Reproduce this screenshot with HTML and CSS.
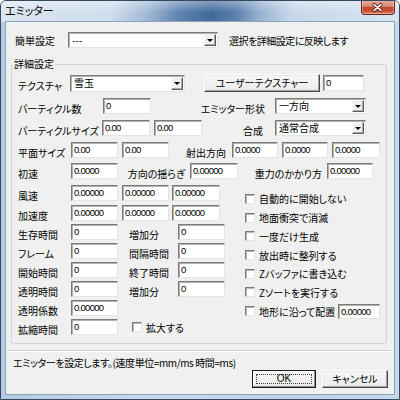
FILE: index.html
```html
<!DOCTYPE html>
<html lang="ja">
<head>
<meta charset="utf-8">
<title>エミッター</title>
<link rel="stylesheet" href="styles.css">
</head>
<body>
<div class="window">
  <div class="titlebar">
    <span class="title">エミッター</span>
    <div class="close-btn">
      <svg width="34" height="15" viewBox="0 0 34 15">
        <path d="M13.5 4.5 L20.5 10.5 M20.5 4.5 L13.5 10.5" stroke="#5a1a10" stroke-width="3.4" stroke-linecap="round" fill="none"/>
        <path d="M13.5 4.5 L20.5 10.5 M20.5 4.5 L13.5 10.5" stroke="#ffffff" stroke-width="1.8" stroke-linecap="round" fill="none"/>
      </svg>
    </div>
  </div>
  <div class="client">
    <div class="top-row">
      <span class="label lbl-kantan">簡単設定</span>
      <div class="combo w150"><span class="combo-text">---</span><span class="combo-arrow"></span></div>
      <span class="label hint">選択を詳細設定に反映します</span>
    </div>

    <div class="group">
      <span class="legend">詳細設定</span>

      <div class="row row-a">
        <span class="label w52">テクスチャ</span>
        <div class="combo combo-tall w115"><span class="combo-text">雪玉</span><span class="combo-arrow"></span></div>
        <div class="btn btn-user">ユーザーテクスチャー</div>
        <div class="edit w41 ml3">0</div>
      </div>

      <div class="row mt6">
        <span class="label w85">パーティクル数</span>
        <div class="edit w48">0</div>
        <span class="label right w124 pr10">エミッター形状</span>
        <div class="combo w91"><span class="combo-text">一方向</span><span class="combo-arrow"></span></div>
      </div>

      <div class="row mt6">
        <span class="label w84">パーティクルサイズ</span>
        <div class="edit w48">0.00</div>
        <div class="edit w48 ml4">0.00</div>
        <span class="label right w73 pr12">合成</span>
        <div class="combo w91"><span class="combo-text">通常合成</span><span class="combo-arrow"></span></div>
      </div>

      <div class="row mt6">
        <span class="label w53">平面サイズ</span>
        <div class="edit w47">0.00</div>
        <div class="edit w47 ml4">0.00</div>
        <span class="label w63 pl17">射出方向</span>
        <div class="edit w46">0.0000</div>
        <div class="edit w46 ml4">0.0000</div>
        <div class="edit w48 ml4">0.0000</div>
      </div>

      <div class="row mt5">
        <span class="label w53">初速</span>
        <div class="edit w47">0.0000</div>
        <span class="label right w72 pr5">方向の揺らぎ</span>
        <div class="edit w48">0.00000</div>
        <span class="label right w89 pr5">重力のかかり方</span>
        <div class="edit w46">0.00000</div>
      </div>

      <div class="lower">
        <div class="left-col">
          <div class="row">
            <span class="label w53">風速</span>
            <div class="edit w47">0.00000</div>
            <div class="edit w47 ml4">0.00000</div>
            <div class="edit w48 ml3">0.00000</div>
          </div>
          <div class="row mt4">
            <span class="label w53">加速度</span>
            <div class="edit w47">0.00000</div>
            <div class="edit w47 ml4">0.00000</div>
            <div class="edit w48 ml3">0.00000</div>
          </div>
          <div class="row mt3">
            <span class="label w53">生存時間</span>
            <div class="edit w47">0</div>
            <span class="label w60 pl11">増加分</span>
            <div class="edit w47">0</div>
          </div>
          <div class="row mt3">
            <span class="label w53">フレーム</span>
            <div class="edit w47">0</div>
            <span class="label w60 pl11">間隔時間</span>
            <div class="edit w47">0</div>
          </div>
          <div class="row mt3">
            <span class="label w53">開始時間</span>
            <div class="edit w47">0</div>
            <span class="label w60 pl11">終了時間</span>
            <div class="edit w47">0</div>
          </div>
          <div class="row mt3">
            <span class="label w53">透明時間</span>
            <div class="edit w47">0</div>
            <span class="label w60 pl11">増加分</span>
            <div class="edit w47">0</div>
          </div>
          <div class="row mt3">
            <span class="label w53">透明係数</span>
            <div class="edit w47">0.00000</div>
          </div>
          <div class="row mt3">
            <span class="label w53">拡縮時間</span>
            <div class="edit w47">0</div>
            <span class="check ml15"></span>
            <span class="check-text">拡大する</span>
          </div>
        </div>

        <div class="right-col">
          <div class="check-row"><span class="check"></span><span class="check-text">自動的に開始しない</span></div>
          <div class="check-row"><span class="check"></span><span class="check-text">地面衝突で消滅</span></div>
          <div class="check-row"><span class="check"></span><span class="check-text">一度だけ生成</span></div>
          <div class="check-row"><span class="check"></span><span class="check-text">放出時に整列する</span></div>
          <div class="check-row"><span class="check"></span><span class="check-text">Zバッファに書き込む</span></div>
          <div class="check-row"><span class="check"></span><span class="check-text">Zソートを実行する</span></div>
          <div class="check-row"><span class="check"></span><span class="check-text w79">地形に沿って配置</span><div class="edit edit-short w42">0.00000</div></div>
        </div>
      </div>
    </div>

    <div class="separator"></div>
    <div class="status">エミッターを設定します。(速度単位=mm/ms 時間=ms)</div>
    <div class="buttons">
      <div class="btn btn-ok"><span class="focus">OK</span></div>
      <div class="btn btn-cancel">キャンセル</div>
    </div>
  </div>
</div>
</body>
</html>
```

FILE: styles.css
```css
* { box-sizing: border-box; }

html, body {
  margin: 0;
  padding: 0;
}

body {
  width: 400px;
  height: 400px;
  overflow: hidden;
  background: #ffffff;
  font-family: "Noto Sans CJK JP", "Noto Sans", sans-serif;
  font-size: 10px;
  font-feature-settings: "palt" 1;
  color: #000;
}

.window {
  width: 400px;
  height: 400px;
  border: 1px solid #34495f;
  border-radius: 6px 6px 0 0;
  background: linear-gradient(to right, #b4cbe3 0%, #c9daec 40%, #bfd3e8 70%, #c6d8eb 100%);
  display: flex;
  flex-direction: column;
  overflow: hidden;
}

.titlebar {
  height: 21px;
  flex: none;
  display: flex;
  align-items: flex-start;
  background:
    linear-gradient(to bottom, rgba(255,255,255,0.35), rgba(255,255,255,0) 55%),
    linear-gradient(100deg, #dbe6f1 0%, #d0dded 28%, #a0b9d5 37%, #5e84af 45%, #42699a 53%, #5a80ac 59%, #97b3d2 65%, #c8d8ea 73%, #d8e4f1 100%);
}

.title {
  margin: 3px 0 0 4px;
  font-size: 11px;
  line-height: 12px;
  color: #000;
}

.close-btn {
  margin: -1px 4px 0 auto;
  width: 34px;
  height: 15px;
  border: 1px solid #6a2419;
  border-top: none;
  border-radius: 0 0 4px 4px;
  background: linear-gradient(to bottom, #eab0a2 0%, #dc8a77 45%, #c4472d 52%, #c24d33 75%, #dd8466 100%);
  box-shadow: inset 0 0 0 1px rgba(255,255,255,0.35);
  display: flex;
}

.close-btn svg { display: block; margin-left: -1px; }

.client {
  margin: 0 5px;
  width: 388px;
  height: 372px;
  flex: none;
  background: #f0f0f0;
  box-shadow: 0 0 0 1px #8aa2bc;
}

.label {
  flex: none;
  line-height: 11px;
  white-space: nowrap;
}

.right { text-align: right; }

.top-row {
  margin-top: 10px;
  padding-left: 9px;
  display: flex;
  align-items: center;
  height: 16px;
}

.lbl-kantan { width: 53px; }
.hint { margin-left: 11px; letter-spacing: -0.5px; }

/* combo box */
.combo {
  flex: none;
  height: 16px;
  display: flex;
  background: #fff;
  border: 1px solid;
  border-color: #7b7b7b #e4e4e4 #e4e4e4 #7b7b7b;
  box-shadow: inset 1px 1px 0 #b0b0b0;
}
.combo-tall { height: 17px; }

.combo-text {
  flex: 1;
  padding: 1px 0 0 3px;
  line-height: 12px;
  white-space: nowrap;
}

.combo-arrow {
  flex: none;
  width: 12px;
  margin: 1px 1px 1px 0;
  background: #f0f0f0;
  border: 1px solid;
  border-color: #f8f8f8 #5c5c5c #5c5c5c #f8f8f8;
  box-shadow: inset -1px -1px 0 #a8a8a8;
  display: flex;
  align-items: center;
  justify-content: center;
}
.combo-arrow::after {
  content: "";
  border-left: 3px solid transparent;
  border-right: 3px solid transparent;
  border-top: 3px solid #000;
  margin-top: 1px;
}

/* edit box */
.edit {
  flex: none;
  height: 16px;
  background: #fff;
  border: 1px solid;
  border-color: #7b7b7b #e4e4e4 #e4e4e4 #7b7b7b;
  box-shadow: inset 1px 1px 0 #b0b0b0;
  padding: 1px 0 0 2px;
  font-family: "Liberation Sans", Arial, sans-serif;
  font-size: 9.5px;
  letter-spacing: -0.7px;
  line-height: 11px;
  white-space: nowrap;
  overflow: hidden;
}
.edit-short { height: 15px; }

/* buttons */
.btn {
  flex: none;
  height: 18px;
  background: linear-gradient(to bottom, #f7f7f7, #ececec);
  border: 1px solid;
  border-color: #ffffff #4a4a4a #4a4a4a #ffffff;
  box-shadow: inset -1px -1px 0 #a0a0a0, inset 1px 1px 0 #e8e8e8;
  display: flex;
  align-items: center;
  justify-content: center;
  line-height: 12px;
  white-space: nowrap;
}

.btn-user { width: 116px; margin-left: 19px; }

/* group box */
.group {
  position: relative;
  margin: 16px 0 0 5px;
  width: 376px;
  height: 280px;
  border: 1px solid #cdd4da;
  border-radius: 3px;
}

.legend {
  position: absolute;
  top: -7px;
  left: 1px;
  padding: 0 1px;
  background: #f0f0f0;
  line-height: 11px;
}

.row {
  display: flex;
  align-items: center;
  height: 16px;
  padding-left: 6px;
}

.group .row .label { padding-top: 4px; }

.row-a { margin-top: 9px; height: 18px; }

.lower {
  display: flex;
  margin-top: 6px;
}

.left-col {
  width: 233px;
  flex: none;
}

.left-col .row { padding-left: 6px; }

.right-col {
  padding-top: 4.6px;
  display: flex;
  flex-direction: column;
}

.check-row {
  height: 18.7px;
  display: flex;
  align-items: center;
}

.check {
  flex: none;
  width: 10px;
  height: 10px;
  background: #fff;
  border: 1px solid;
  border-color: #7a7a7a #e2e2e2 #e2e2e2 #7a7a7a;
  box-shadow: inset 1px 1px 0 #b8b8b8;
  margin-right: 4px;
}

.check-text {
  flex: none;
  line-height: 11px;
  white-space: nowrap;
}

/* bottom area */
.separator {
  margin: 6px 4px 0 0;
  height: 2px;
  border-top: 1px solid #d0d0d0;
  border-bottom: 1px solid #ffffff;
}

.status {
  margin-top: 4.5px;
  padding-left: 7px;
  height: 11px;
  line-height: 11px;
  letter-spacing: -0.4px;
  white-space: nowrap;
}

.buttons {
  margin-top: 2.5px;
  display: flex;
  justify-content: flex-end;
  gap: 6px;
  padding-right: 6px;
}

.btn-ok {
  width: 64px;
  border: 1px solid #1e1e1e;
  box-shadow: inset -1px -1px 0 #8c8c8c, inset 1px 1px 0 #ffffff;
  padding: 3px;
}
.btn-ok .focus {
  flex: 1;
  align-self: stretch;
  border: 1px dotted #404040;
  display: flex;
  align-items: center;
  justify-content: center;
  font-family: "Liberation Sans", Arial, sans-serif;
  font-size: 10px;
}

.btn-cancel { width: 66px; }

/* sizes */
.w41 { width: 41px; }
.w42 { width: 42px; }
.w46 { width: 46px; }
.w47 { width: 47px; }
.w48 { width: 48px; }
.w52 { width: 52px; }
.w53 { width: 53px; }
.w60 { width: 60px; }
.w63 { width: 63px; }
.w72 { width: 72px; }
.w73 { width: 73px; }
.w79 { width: 79px; }
.w84 { width: 84px; }
.w85 { width: 85px; }
.w89 { width: 89px; }
.w91 { width: 91px; }
.w115 { width: 115px; }
.w124 { width: 124px; }
.w150 { width: 150px; }

.ml3 { margin-left: 3px; }
.ml4 { margin-left: 4px; }
.ml15 { margin-left: 14px; }
.mt3 { margin-top: 3px; }
.mt4 { margin-top: 4px; }
.mt5 { margin-top: 5px; }
.mt6 { margin-top: 6px; }
.pl11 { padding-left: 11px; }
.pl17 { padding-left: 17px; }
.pr5 { padding-right: 5px; }
.pr10 { padding-right: 10px; }
.pr12 { padding-right: 12px; }
```
